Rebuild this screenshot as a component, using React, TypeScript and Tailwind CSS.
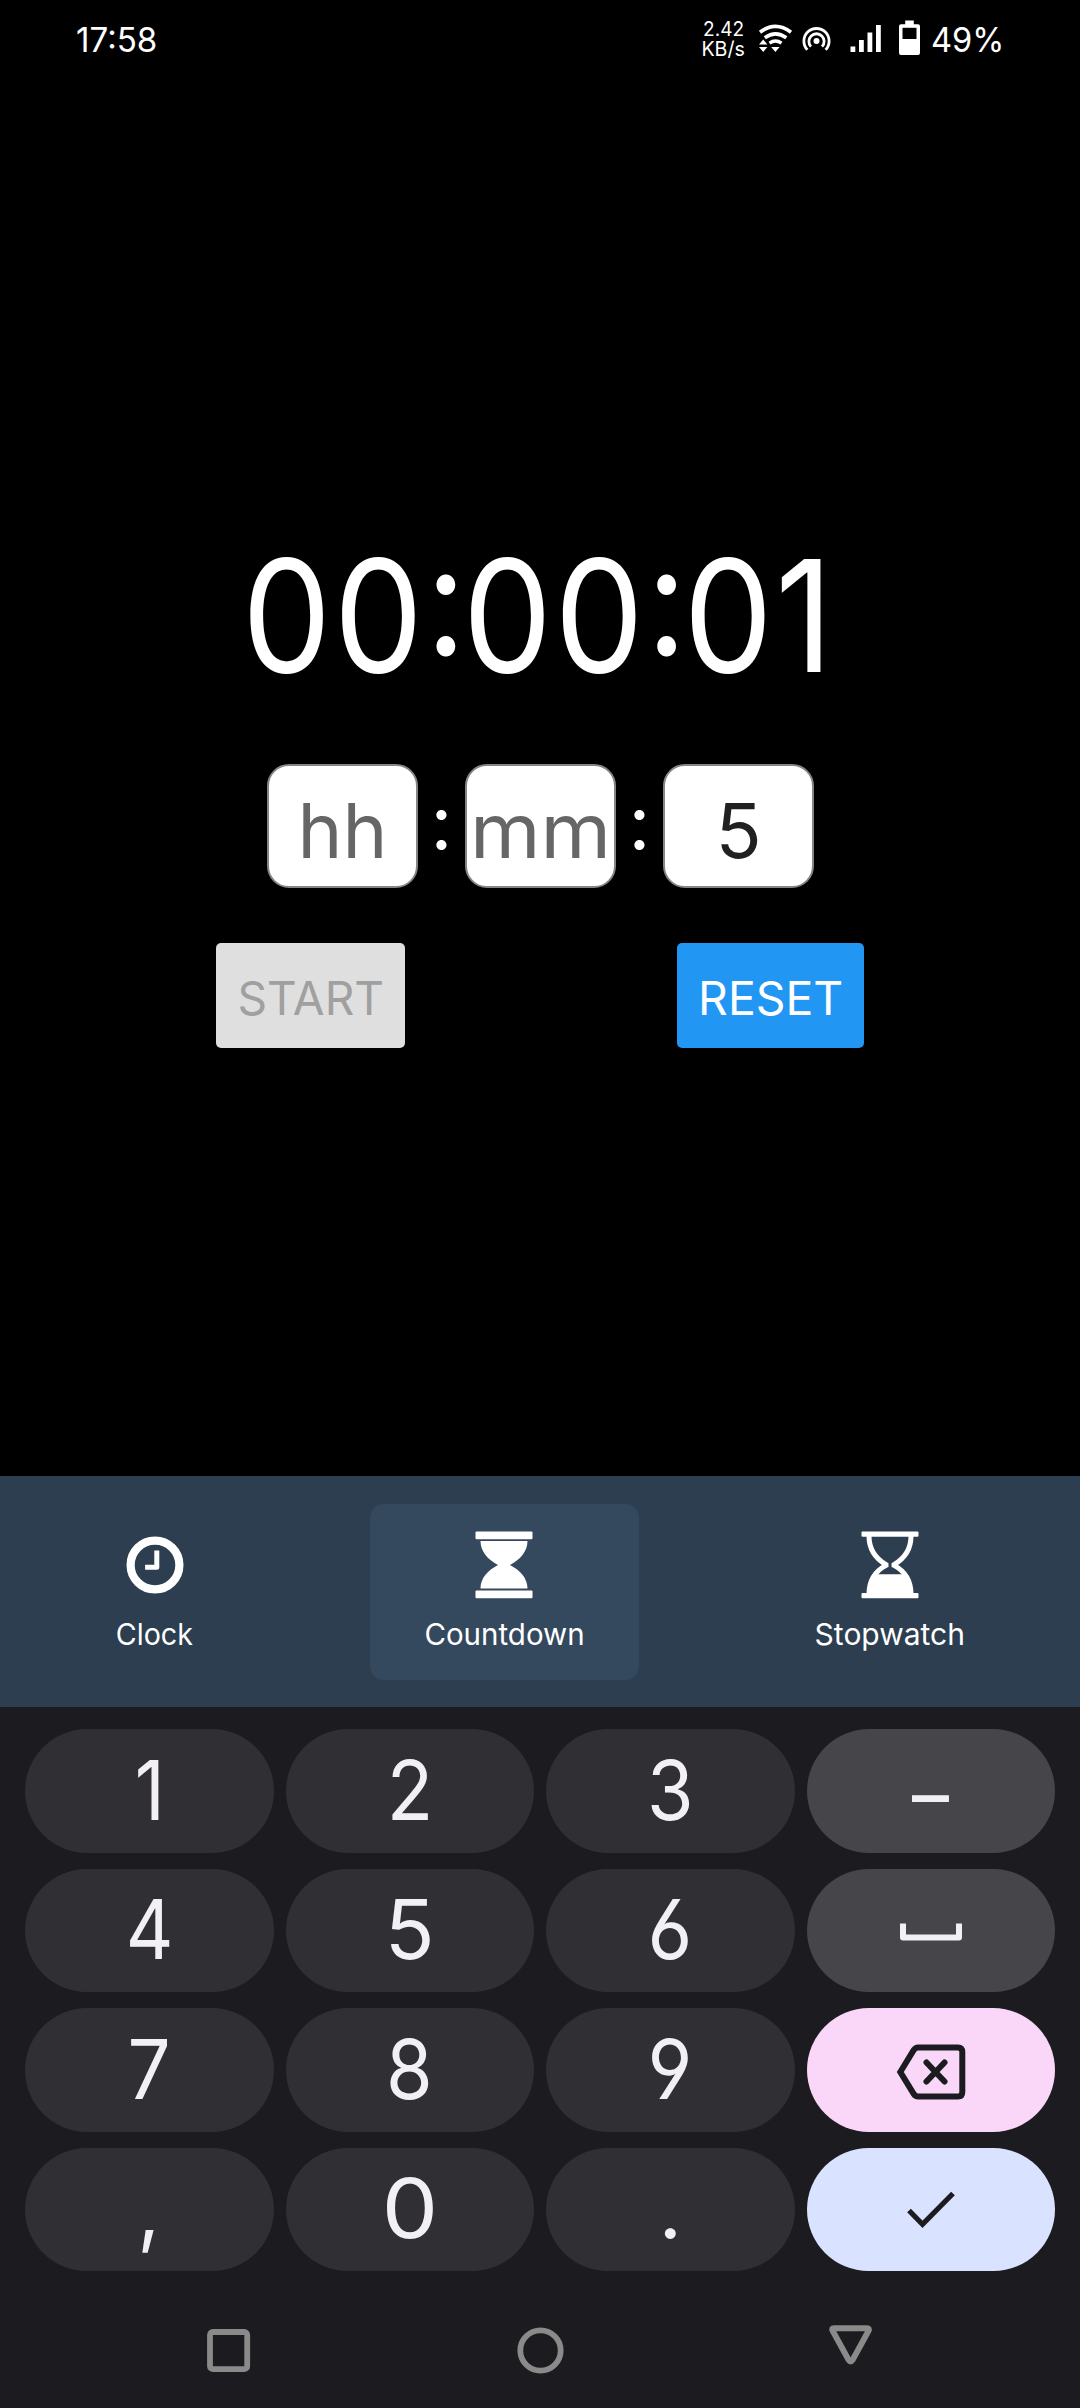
import type { ReactNode } from "react";

function StatusBar() {
  return (
    <header className="flex h-20 items-start pl-[76px] text-white">
      <span className="mt-[20px] h-10 w-[80px] origin-left scale-x-[0.975] text-[34px] leading-10 whitespace-nowrap">17:58</span>
      <div className="ml-[544.500px] flex h-10 w-[46px] flex-col items-center text-[20px] leading-5 mt-[19px]">
        <span className="scale-x-[0.95]">2.42</span>
        <span className="scale-x-[0.98] whitespace-nowrap">KB/s</span>
      </div>
      <svg className="mt-[20px] ml-[10px] h-9 w-9" viewBox="757 20 36 36" fill="none" stroke="#fff">
        <path d="M760 32.2Q775.500 20.500 791 32.200" strokeWidth="3.6" />
        <path d="M764.8 37.8Q775.500 30 786.300 37.800" strokeWidth="3.6" />
        <path d="M769.5 43.2Q775.500 39 781.500 43.200" strokeWidth="3.4" />
        <path d="M759 44.5l4.2-5 4.2 5zM759 47l4.2 5 4.2-5zM771.2 47h8.4l-4.2 5z" fill="#fff" stroke="none" />
      </svg>
      <svg className="mt-[20px] ml-[8px] h-9 w-[31px]" viewBox="801 20 31 36" fill="none" stroke="#fff" strokeWidth="2.8">
        <path d="M807.4 49.8A12.6 12.6 0 1 1 825.6 49.8" />
        <path d="M811 46.6A7.6 7.6 0 1 1 822 46.6" />
        <circle cx="816.5" cy="41" r="3" fill="#fff" stroke="none" />
      </svg>
      <svg className="mt-[20px] ml-[18px] h-9 w-[31px]" viewBox="850 20 31 36" fill="#fff">
        <path d="M850.5 46.5h4.8V52h-4.8zM859 40h4.8v12H859zM867.5 32.5h4.8V52h-4.8zM876 25h4.8v27H876z" />
      </svg>
      <svg className="mt-[20px] ml-[18px] h-9 w-[21px]" viewBox="899 20 21 36">
        <path d="M905.2 20.5h8.6v3.7h4.2a2 2 0 0 1 2 2V53a2 2 0 0 1-2 2h-17a2 2 0 0 1-2-2V26.200a2 2 0 0 1 2-2h4.200z" fill="#fff" />
        <path d="M902.500 27.800h14V39h-14z" fill="#000" />
      </svg>
      <span className="mt-[20px] ml-[11px] h-10 origin-left scale-x-[0.96] text-[34px] leading-10 whitespace-nowrap">49%</span>
    </header>
  );
}

function TimeField({ children, muted }: { children: ReactNode; muted?: boolean }) {
  return (
    <div
      className={`flex h-[124px] w-[151px] items-center justify-center rounded-[22px] border-[2.500px] border-[#858585] bg-white pt-[8px] text-[76px] leading-none ${
        muted ? "text-[#666666]" : "text-[#212121]"
      }`}
    >
      {children}
    </div>
  );
}

function Colon() {
  return (
    <span className="flex w-[47px] items-center justify-center pt-[8px] text-[76px] leading-none text-white [font-feature-settings:'case']">:</span>
  );
}

function Key({ children, className = "bg-[#302f34]" }: { children: ReactNode; className?: string }) {
  return <div className={`flex items-center justify-center rounded-[62px] ${className}`}>{children}</div>;
}

function ClockIcon() {
  return (
    <svg className="h-[68px] w-[58px]" viewBox="127 1531.500 57 68" fill="none" stroke="#fff">
      <circle cx="155.500" cy="1565.500" r="24.400" strokeWidth="8.200" />
      <path d="M157.300 1551v16.700h-11.700" strokeWidth="5" strokeLinejoin="round" />
    </svg>
  );
}

function HourglassFull() {
  return (
    <svg className="h-[68px] w-[58px]" viewBox="0 0 58 68" fill="#fff">
      <rect x="0.500" y="0.500" width="57" height="7.800" rx="1" />
      <rect x="0.500" y="59.500" width="57" height="7.800" rx="1" />
      <path d="M5.500 10h47c0 10-7 18.500-17.500 24 10.500 5.500 17.500 13.500 17.500 23.500h-47c0-10 7-18 17.500-23.500C12.500 28.500 5.500 20 5.500 10z" />
    </svg>
  );
}

function HourglassHalf() {
  return (
    <svg className="h-[68px] w-[58px]" viewBox="0 0 58 68" fill="none" stroke="#fff">
      <path d="M8 5c0 13 6.500 22.500 17 28.600v.8C14.500 40 8 49.500 8 63" strokeWidth="5" />
      <path d="M50 5c0 13-6.500 22.500-17 28.600v.8C43.500 40 50 49.500 50 63" strokeWidth="5" />
      <path d="M15.500 43.300h27c4 5.200 6.500 11 7.200 19.200H8.300c.7-8.200 3.200-14 7.200-19.200z" fill="#fff" stroke="none" />
      <rect x="0.500" y="0.500" width="57" height="5.200" rx="1" fill="#fff" stroke="none" />
      <rect x="0.500" y="62" width="57" height="5.200" rx="1" fill="#fff" stroke="none" />
    </svg>
  );
}

function Tab({ icon, label, className }: { icon: ReactNode; label: string; className: string }) {
  return (
    <div className={`flex h-[176px] flex-col items-center rounded-[14px] pt-[27.500px] text-[30px] text-white ${className}`}>
      {icon}
      <span className="mt-[14.500px] leading-10 whitespace-nowrap">{label}</span>
    </div>
  );
}

const digit = "block text-[82px] leading-none text-[#f2f0f5] [font-feature-settings:'cv03','cv04']";

export default function App() {
  return (
    <div className="flex h-[2408px] w-[1080px] flex-col overflow-hidden bg-black font-['Inter',sans-serif]">
      <StatusBar />

      <main className="flex h-[1396px] flex-col">
        <div className="mt-[456px] ml-[242px] h-40 w-[592px] origin-left scale-x-[0.91] text-[155.500px] leading-40 whitespace-nowrap text-white">
          <span className="tracking-[2.700px]">00</span>
          <span className="inline-block w-[41px] text-center [font-feature-settings:'case']">:</span>
          <span className="tracking-[2.700px]">00</span>
          <span className="inline-block w-[41px] text-center [font-feature-settings:'case']">:</span>
          <span className="tracking-[2.700px]">01</span>
        </div>

        <div className="mt-[68px] ml-[267px] flex h-[124px]">
          <TimeField muted>hh</TimeField>
          <Colon />
          <TimeField muted>
            <span className="scale-x-[1.06]">mm</span>
          </TimeField>
          <Colon />
          <TimeField>5</TimeField>
        </div>

        <div className="mt-[55px] mr-[216px] ml-[216px] flex h-[105px] justify-between text-[47px] leading-none">
          <button className="w-[189px] rounded-[5px] bg-[#dfdfdf] pt-[3px] text-[#a0a0a0]">
            <span className="-ml-4 -mr-4 inline-block scale-x-[0.98]">START</span>
          </button>
          <button className="w-[187px] rounded-[5px] bg-[#2196f3] pt-[3px] text-white">
            <span className="-ml-4 -mr-4 inline-block scale-x-[0.985]">RESET</span>
          </button>
        </div>
      </main>

      <nav className="flex h-[231px] items-center justify-around bg-[#2c3e50]">
        <Tab icon={<ClockIcon />} label="Clock" className="w-[188px] [&>span]:scale-x-[0.955]" />
        <Tab icon={<HourglassFull />} label="Countdown" className="w-[269px] bg-[#34495e] [&>span]:scale-x-[0.983]" />
        <Tab icon={<HourglassHalf />} label="Stopwatch" className="w-[259px]" />
      </nav>

      <section className="flex flex-1 flex-col bg-[#1c1b1f]">
        <div className="mt-[22px] mr-[25px] ml-[25px] grid h-[542px] grid-cols-4 grid-rows-4 gap-x-3 gap-y-4">
          <Key><span className={`${digit} scale-x-[0.9]`}>1</span></Key>
          <Key><span className={`${digit} scale-x-[0.93]`}>2</span></Key>
          <Key><span className={`${digit} scale-x-[0.92]`}>3</span></Key>
          <Key className="bg-[#46454a]"><span className={`${digit} scale-x-[0.9] pt-[8px]`}>–</span></Key>
          <Key><span className={`${digit} scale-x-[0.9]`}>4</span></Key>
          <Key><span className={digit}>5</span></Key>
          <Key><span className={`${digit} scale-x-[0.94]`}>6</span></Key>
          <Key className="bg-[#46454a]">
            <svg className="mt-[3px] h-[18px] w-[62px]" viewBox="0 0 62 18" fill="none" stroke="#f2f0f5" strokeWidth="6" strokeLinejoin="round">
              <path d="M3 0.500V14.500H59V0.500" />
            </svg>
          </Key>
          <Key><span className={`${digit} scale-x-[0.93]`}>7</span></Key>
          <Key><span className={`${digit} scale-x-[0.92]`}>8</span></Key>
          <Key><span className={`${digit} scale-x-[0.94]`}>9</span></Key>
          <Key className="bg-[#fad7f8]">
            <svg className="mt-[5px] h-[56px] w-[70px]" viewBox="0 0 70 56" fill="none" stroke="#1c1b1f" strokeWidth="6">
              <path d="M4.300 28 17.800 6Q19.500 3.500 22 3.500H62Q66.300 3.500 66.300 8V48Q66.300 52.500 62 52.500H22Q19.500 52.500 17.800 50z" />
              <path d="M30.500 18.500 48.500 37.500M48.500 18.500 30.500 37.500" strokeLinecap="round" />
            </svg>
          </Key>
          <Key><span className={`${digit} scale-x-[0.95]`}>,</span></Key>
          <Key><span className={`${digit} scale-x-[1.09]`}>0</span></Key>
          <Key><span className={digit}>.</span></Key>
          <Key className="bg-[#d9e2ff]">
            <svg className="mt-[1px] h-[38px] w-[50px]" viewBox="0 0 50 38" fill="none" stroke="#1c1b1f" strokeWidth="5.200">
              <path d="M3 19.500 16.500 33.300 47 2.500" />
            </svg>
          </Key>
        </div>

        <div className="flex flex-1">
          <svg className="mt-[57px] ml-[206px] h-[46px] w-[46px]" viewBox="206 2328 46 46" fill="none" stroke="#8a8a8b" strokeWidth="5.800">
            <rect x="210" y="2332" width="37.200" height="37.200" rx="3" />
          </svg>
          <svg className="mt-[56px] ml-[265px] h-[48px] w-[48px]" viewBox="517 2327 48 48" fill="none" stroke="#8a8a8b" strokeWidth="5.800">
            <circle cx="540.500" cy="2350.500" r="20.200" />
          </svg>
          <svg className="mt-[53px] ml-[262px] h-[42px] w-[46px]" viewBox="827 2324 46 42" fill="none" stroke="#8a8a8b" strokeWidth="6" strokeLinejoin="round">
            <path d="M834 2328.300h33q2.800 0 1.500 2.600l-16 29.200q-1.900 2.600-3.800 0l-16-29.200q-1.500-2.600 1.300-2.600z" />
          </svg>
        </div>
      </section>
    </div>
  );
}
